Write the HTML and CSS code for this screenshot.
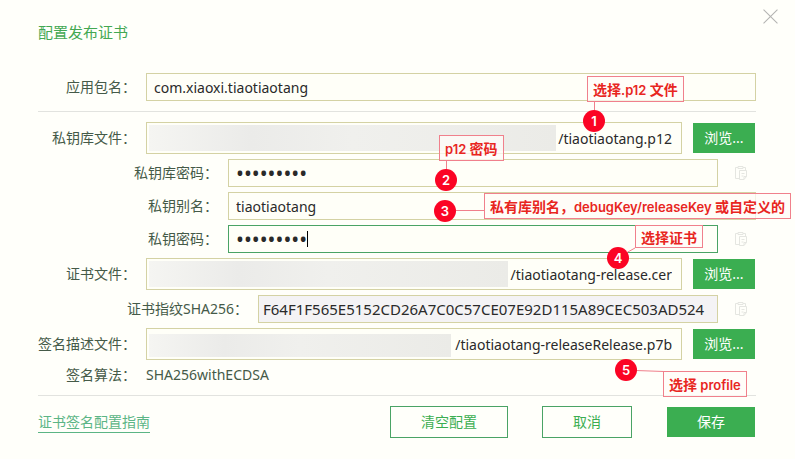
FILE: index.html
```html
<!DOCTYPE html>
<html lang="zh-CN">
<head>
<meta charset="utf-8">
<meta name="viewport" content="width=device-width, initial-scale=1">
<title>配置发布证书</title>
<link rel="stylesheet" href="styles.css">
</head>
<body>
<svg class="defs" aria-hidden="true">
  <symbol id="paste" viewBox="0 0 14 16">
    <path d="M4 2.5H1.5v11H5M9 2.5h2.500V5M4 1.500h5v2H4zM5.500 5.500h7v6l-2.500 3H5.500zM7.500 8.500h3M7.500 11h2M12.500 11.500H10v3"/>
  </symbol>
</svg>
<main class="dialog">
  <button class="close" type="button" aria-label="关闭"><svg viewBox="0 0 14 14"><path d="M.5.5l13 13M13.500.5l-13 13"/></svg></button>
  <h1 class="title">配置发布证书</h1>
  <form class="form">
    <div class="row">
      <label class="label" for="pkg">应用包名：</label>
      <input class="input" id="pkg" type="text" value="com.xiaoxi.tiaotiaotang">
    </div>
    <hr class="rule">
    <div class="row">
      <label class="label" for="store">私钥库文件：</label>
      <div class="file file-store"><input class="input input-file" id="store" type="text" value="/tiaotiaotang.p12"><span class="mask"></span></div>
      <button class="browse" type="button">浏览...</button>
    </div>
    <div class="row">
      <label class="label label-nested" for="storepw">私钥库密码：</label>
      <input class="input input-password" id="storepw" type="password" value="123456789">
      <button class="paste" type="button" aria-label="粘贴"><svg><use href="#paste"/></svg></button>
    </div>
    <div class="row">
      <label class="label label-nested" for="alias">私钥别名：</label>
      <input class="input" id="alias" type="text" value="tiaotiaotang">
    </div>
    <div class="row">
      <label class="label label-nested" for="keypw">私钥密码：</label>
      <div class="active"><input class="input input-password" id="keypw" type="password" value="123456789"><span class="caret"></span></div>
      <button class="paste" type="button" aria-label="粘贴"><svg><use href="#paste"/></svg></button>
    </div>
    <div class="row">
      <label class="label" for="cert">证书文件：</label>
      <div class="file file-cert"><input class="input input-file" id="cert" type="text" value="/tiaotiaotang-release.cer"><span class="mask"></span></div>
      <button class="browse" type="button">浏览...</button>
    </div>
    <div class="row">
      <label class="label label-sha" for="sha">证书指纹SHA256：</label>
      <input class="input input-sha" id="sha" type="text" readonly value="F64F1F565E5152CD26A7C0C57CE07E92D115A89CEC503AD524">
      <button class="paste" type="button" aria-label="复制"><svg><use href="#paste"/></svg></button>
    </div>
    <div class="row">
      <label class="label" for="profile">签名描述文件：</label>
      <div class="file file-profile"><input class="input input-file" id="profile" type="text" value="/tiaotiaotang-releaseRelease.p7b"><span class="mask"></span></div>
      <button class="browse" type="button">浏览...</button>
    </div>
    <div class="row row-text">
      <span class="label">签名算法：</span>
      <span>SHA256withECDSA</span>
    </div>
    <hr class="rule">
    <div class="footer">
      <a class="guide" href="#guide">证书签名配置指南</a>
      <button class="btn btn-clear" type="button">清空配置</button>
      <button class="btn btn-cancel" type="button">取消</button>
      <button class="btn btn-save" type="submit">保存</button>
    </div>
  </form>

  <svg class="leaders" aria-hidden="true">
    <path d="M594.500 101v12M446.500 160v10M456 210.500h29M626 253l9-5M636 370.500l28 1"/>
  </svg>
  <span class="note note-1">选择<span class="latin">.p12 </span>文件</span><span class="pin pin-1">1</span>
  <span class="note note-2"><span class="latin">p12 </span>密码</span><span class="pin pin-2">2</span>
  <span class="note note-3">私有库别名，<span class="latin">debugKey/releaseKey </span>或自定义的</span><span class="pin pin-3">3</span>
  <span class="note note-4">选择证书</span><span class="pin pin-4">4</span>
  <span class="note note-5">选择<span class="latin"> profile</span></span><span class="pin pin-5">5</span>
</main>
</body>
</html>
```
FILE: styles.css
```css
* { box-sizing: border-box; }

body {
  margin: 0;
  background: #fffffa;
  color: #455a48;
  font: 14px/20px "Noto Sans", "Noto Sans CJK SC", sans-serif;
}

button, input { font: inherit; }

.defs { position: absolute; width: 0; height: 0; }

.dialog {
  position: relative;
  padding: 22px 39px 20px 38px;
}

.close {
  position: absolute;
  top: 9px;
  right: 17px;
  width: 15px;
  height: 15px;
  padding: 0;
  border: 0;
  background: none;
}
.close svg { display: block; width: 15px; height: 15px; fill: none; stroke: #b4b4b2; }

.title {
  margin: 0 0 31px;
  color: #43a852;
  font-size: 15px;
  font-weight: 400;
  line-height: 20px;
}

.form { display: flex; flex-direction: column; gap: 5px; }

.row { display: flex; align-items: center; }

.label {
  flex: none;
  width: 98px;
  margin-right: 10px;
  text-align: right;
  white-space: nowrap;
}
.label-nested { width: 180px; }
.label-sha { width: 210px; }

.input {
  flex: 1;
  min-width: 0;
  height: 28px;
  padding: 0 7px;
  border: 1px solid #d4d2a4;
  border-radius: 0;
  outline: 0;
  background: #fffff8;
  color: #2a2a2a;
}
.input-password { font-size: 21px; }
.input-sha { padding: 0 4px; background: #f4f3f5; font-size: 15px; }

.file { position: relative; display: flex; flex: 1; }
.input-file { height: 32px; padding: 0 9px; text-align: right; }

.mask {
  position: absolute;
  top: 3px;
  bottom: 3px;
  left: 3px;
  background: linear-gradient(90deg, #f5f5f2, #ebebe9 25%, #f0f0ed 50%, #ebebe7);
}
.file-store .mask { right: 126px; }
.file-cert .mask { right: 174px; }
.file-profile .mask { top: 6px; right: 231px; }

.active { position: relative; display: flex; flex: 1; }
.active .input { border-color: #4aa365; }
.caret { position: absolute; top: 6px; left: 79px; width: 1px; height: 16px; background: #000; }

.browse {
  width: 62px;
  height: 30px;
  margin: 0 1px 0 11px;
  padding: 0;
  border: 0;
  background: #3bae51;
  color: #fff;
}

.paste {
  width: 14px;
  height: 16px;
  margin: 0 8px 0 16px;
  padding: 0;
  border: 0;
  background: none;
}
.paste svg { display: block; width: 14px; height: 16px; fill: none; stroke: #e5e6e1; }

.rule {
  width: 100%;
  height: 1px;
  margin: 5px 0;
  border: 0;
  background: #e2e3df;
}

.row-text { height: 20px; }

.footer { display: flex; align-items: center; }

.guide {
  margin-right: auto;
  border-bottom: 1px solid #5bb585;
  color: #5bb585;
  text-decoration: none;
}

.btn {
  height: 32px;
  padding: 0;
  border: 1px solid #4aa365;
  background: #fffffa;
  color: #3bae51;
}
.btn-clear { width: 118px; margin-right: 34px; }
.btn-cancel { width: 90px; margin-right: 35px; }
.btn-save { width: 88px; height: 30px; margin-right: 1px; border: 0; background: #3bae51; color: #fff; }

/* Annotation layer over the form */
.leaders {
  position: absolute;
  top: 0;
  left: 0;
  width: 100%;
  height: 100%;
  fill: none;
  stroke: #f0808c;
  pointer-events: none;
}

.note {
  position: absolute;
  height: 26px;
  padding: 0 5px;
  border: 1px solid #f0808c;
  background: rgba(255, 252, 248, 0.75);
  color: #e8261f;
  font: 700 14px/26px Inter, "Noto Sans CJK SC", sans-serif;
  white-space: nowrap;
}
.latin { font-size: 13px; font-weight: 600; }
.note-1 { top: 76px; left: 587px; }
.note-2 { top: 135px; left: 439px; }
.note-3 { top: 193px; left: 484px; }
.note-4 { top: 225px; left: 635px; height: 23px; line-height: 23px; }
.note-5 { top: 371px; left: 663px; }

.pin {
  position: absolute;
  width: 22px;
  height: 22px;
  border-radius: 50%;
  background: #fb0424;
  color: #fff;
  font: 600 13px/22px Inter, sans-serif;
  text-align: center;
}
.pin-1 { top: 110px; left: 583px; }
.pin-2 { top: 169px; left: 435px; }
.pin-3 { top: 200px; left: 434px; }
.pin-4 { top: 247px; left: 607px; }
.pin-5 { top: 359px; left: 615px; }
```
